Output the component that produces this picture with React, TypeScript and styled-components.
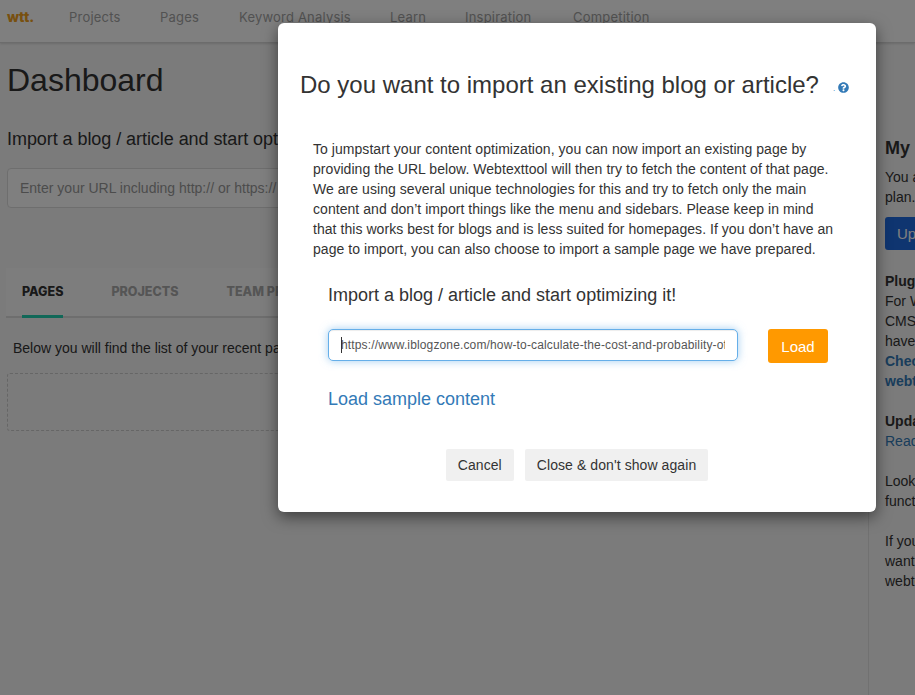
import React from "react";
import styled, { createGlobalStyle } from "styled-components";
import { FaQuestionCircle } from "react-icons/fa";

const Global = createGlobalStyle`
  html, body { margin: 0; padding: 0; height: 100%; overflow: hidden; }
  body { font-family: "Liberation Sans", Arial, sans-serif; font-size: 14px; line-height: 20px; color: #333; background: #f6f6f6; }
  * { box-sizing: border-box; }
`;

const Page = styled.div`
  position: relative;
  width: 915px;
  height: 695px;
  overflow: hidden;
`;
const Nav = styled.nav`
  height: 43px;
  background: #fff;
  border-bottom: 1px solid #d8d8d8;
  box-shadow: 0 1px 2px rgba(0,0,0,.12);
  display: flex;
  align-items: center;
  padding: 0 0 8px 7px;
  font-family: Inter, "Noto Sans", sans-serif;
  font-size: 13px;
  letter-spacing: .2px;
  color: #a4a4a4;
`;
const Logo = styled.span`
  font-weight: 800;
  font-size: 14px;
  letter-spacing: 0;
  color: #f0a020;
  width: 62px;
`;
const NavItem = styled.span<{ $w: number }>`
  width: ${p => p.$w}px;
  flex: none;
  white-space: nowrap;
`;
const Columns = styled.div`
  display: flex;
  height: 652px;
`;
const Main = styled.main`
  width: 868px;
  flex: none;
  padding: 0 7px;
`;
const Title = styled.h1`
  margin: 19px 0 0;
  font-size: 32px;
  line-height: 36px;
  font-weight: 400;
`;
const Sub = styled.h2`
  margin: 31px 0 0;
  font-size: 18px;
  line-height: 20px;
  font-weight: 400;
  letter-spacing: -.06px;
`;
const UrlBox = styled.div`
  margin-top: 19px;
  height: 40px;
  width: 700px;
  background: #fff;
  border: 1px solid #ddd;
  border-radius: 4px;
  padding: 0 12px;
  display: flex;
  align-items: center;
  color: #999;
`;
const Tabs = styled.div`
  margin-top: 60px;
  height: 50px;
  display: flex;
  gap: 48px;
  padding-left: 16px;
  background: #fbfbfb;
  border-bottom: 2px solid #ddd;
  font-family: Inter, "Noto Sans", sans-serif;
  font-weight: 800;
  font-size: 12.5px;
  margin-left: -1px;
`;
const Tab = styled.div<{ $active?: boolean }>`
  height: 50px;
  padding-top: 14px;
  color: ${p => (p.$active ? "#333" : "#aaa")};
  border-bottom: ${p => (p.$active ? "3px solid #22d0b0" : "none")};
`;
const Note = styled.p`
  margin: 20px 0 0 6px;
`;
const Dashed = styled.div`
  margin-top: 15px;
  height: 58px;
  border: 1px dashed #ccc;
  border-radius: 3px;
`;
const Side = styled.aside`
  flex: none;
  width: 240px;
  padding: 95px 0 0 16px;
  border-left: 1px solid #e2e2e2;
`;
const SideTitle = styled.h3`
  margin: 0 0 9px;
  font-size: 18px;
  line-height: 20px;
  font-weight: 700;
`;
const SideText = styled.p`
  margin: 0 0 20px;
`;
const Upgrade = styled.div`
  width: 120px;
  height: 33px;
  margin: -10px 0 21px;
  padding: 7px 12px;
  border-radius: 3px;
  background: #1f6ae0;
  color: #fff;
  font-size: 15px;
`;
const SideLink = styled.span<{ $bold?: boolean }>`
  color: #337ab7;
  font-weight: ${p => (p.$bold ? 700 : 400)};
`;
const Overlay = styled.div`
  position: absolute;
  inset: 0;
  background: rgba(0,0,0,.5);
`;
const Modal = styled.div`
  position: absolute;
  left: 278px;
  top: 23px;
  width: 598px;
  height: 489px;
  background: #fff;
  border-radius: 6px;
  box-shadow: 0 5px 15px rgba(0,0,0,.5);
  padding: 46px 22px 0;
`;
const ModalHead = styled.div`
  display: flex;
  align-items: center;
  height: 32px;
`;
const ModalTitle = styled.h2`
  margin: 0;
  font-size: 24px;
  line-height: 32px;
  font-weight: 400;
  white-space: nowrap;
`;
const Help = styled.span`
  display: inline-flex;
  align-items: flex-end;
  margin-left: 14px;
  margin-top: 5px;
  color: #337ab7;
  font-size: 11px;
  line-height: 11px;
  gap: 3px;
`;
const Dot = styled.span`
  font-size: 8px;
  line-height: 8px;
`;
const Intro = styled.p`
  margin: 38px 0 0 13px;
  width: 525px;
  font-size: 14px;
  line-height: 20px;
  letter-spacing: .05px;
`;
const Import = styled.div`
  margin: 26px 0 0 28px;
  width: 500px;
`;
const ImportTitle = styled.h3`
  margin: 0;
  font-size: 18px;
  line-height: 20px;
  font-weight: 400;
`;
const ImportRow = styled.div`
  display: flex;
  align-items: flex-start;
  gap: 30px;
  margin-top: 24px;
`;
const InputWrap = styled.div`
  position: relative;
  width: 410px;
`;
const UrlInput = styled.input`
  display: block;
  width: 100%;
  height: 32px;
  padding: 0 12px;
  border: 1px solid #66afe9;
  border-radius: 5px;
  outline: none;
  box-shadow: inset 0 1px 1px rgba(0,0,0,.075), 0 0 8px rgba(102,175,233,.6);
  font-family: "Liberation Sans", Arial, sans-serif;
  font-size: 12px;
  letter-spacing: .14px;
  color: #555;
`;
const Caret = styled.span`
  position: absolute;
  left: 13px;
  top: 8px;
  width: 1px;
  height: 16px;
  background: #333;
`;
const LoadButton = styled.button`
  width: 60px;
  height: 34px;
  border: 0;
  border-radius: 3px;
  background: #ff9900;
  color: #fff;
  font-family: "Liberation Sans", Arial, sans-serif;
  font-size: 15px;
  padding: 0;
`;
const SampleLink = styled.a`
  display: block;
  margin-top: 26px;
  font-size: 18px;
  line-height: 20px;
  color: #337ab7;
`;
const Footer = styled.div`
  display: flex;
  justify-content: center;
  gap: 11px;
  margin: 40px 0 0;
`;
const GreyButton = styled.button`
  height: 32px;
  padding: 0 12px;
  border: 0;
  border-radius: 2px;
  background: #f0f0f0;
  color: #333;
  font-family: "Liberation Sans", Arial, sans-serif;
  font-size: 14px;
  letter-spacing: .08px;
`;

export default function App() {
  return (
    <>
      <Global />
      <Page>
        <Nav>
          <Logo>wtt.</Logo>
          <NavItem $w={91}>Projects</NavItem>
          <NavItem $w={79}>Pages</NavItem>
          <NavItem $w={151}>Keyword Analysis</NavItem>
          <NavItem $w={75}>Learn</NavItem>
          <NavItem $w={108}>Inspiration</NavItem>
          <NavItem $w={100}>Competition</NavItem>
        </Nav>
        <Columns>
          <Main>
            <Title>Dashboard</Title>
            <Sub>Import a blog / article and start optimizing it!</Sub>
            <UrlBox>Enter your URL including http:// or https://</UrlBox>
            <Tabs>
              <Tab $active>PAGES</Tab>
              <Tab>PROJECTS</Tab>
              <Tab>TEAM PROJECTS</Tab>
            </Tabs>
            <Note>Below you will find the list of your recent pages.</Note>
            <Dashed />
          </Main>
          <Side>
            <SideTitle>My plan</SideTitle>
            <SideText>You are currently on the free<br />plan.</SideText>
            <Upgrade>Upgrade</Upgrade>
            <SideText>
              <b>Plugins</b><br />
              For WordPress and other<br />
              CMS systems we<br />
              have plugins.<br />
              <SideLink $bold>Check out<br />webtexttool</SideLink>
            </SideText>
            <SideText>
              <b>Updates</b><br />
              <SideLink>Read more</SideLink>
            </SideText>
            <SideText>Looking for more<br />functionality?</SideText>
            <SideText>If you have questions or<br />want to talk, mail<br />webtexttool</SideText>
          </Side>
        </Columns>
        <Overlay />
        <Modal>
          <ModalHead>
            <ModalTitle>Do you want to import an existing blog or article?</ModalTitle>
            <Help><Dot>.</Dot><FaQuestionCircle /></Help>
          </ModalHead>
          <Intro>
            To jumpstart your content optimization, you can now import an existing page by
            providing the URL below. Webtexttool will then try to fetch the content of that page.
            We are using several unique technologies for this and try to fetch only the main
            content and don’t import things like the menu and sidebars. Please keep in mind
            that this works best for blogs and is less suited for homepages. If you don’t have an
            page to import, you can also choose to import a sample page we have prepared.
          </Intro>
          <Import>
            <ImportTitle>Import a blog / article and start optimizing it!</ImportTitle>
            <ImportRow>
              <InputWrap>
                <UrlInput readOnly value="https://www.iblogzone.com/how-to-calculate-the-cost-and-probability-of-a-project" />
                <Caret />
              </InputWrap>
              <LoadButton>Load</LoadButton>
            </ImportRow>
            <SampleLink>Load sample content</SampleLink>
          </Import>
          <Footer>
            <GreyButton>Cancel</GreyButton>
            <GreyButton>Close &amp; don't show again</GreyButton>
          </Footer>
        </Modal>
      </Page>
    </>
  );
}
